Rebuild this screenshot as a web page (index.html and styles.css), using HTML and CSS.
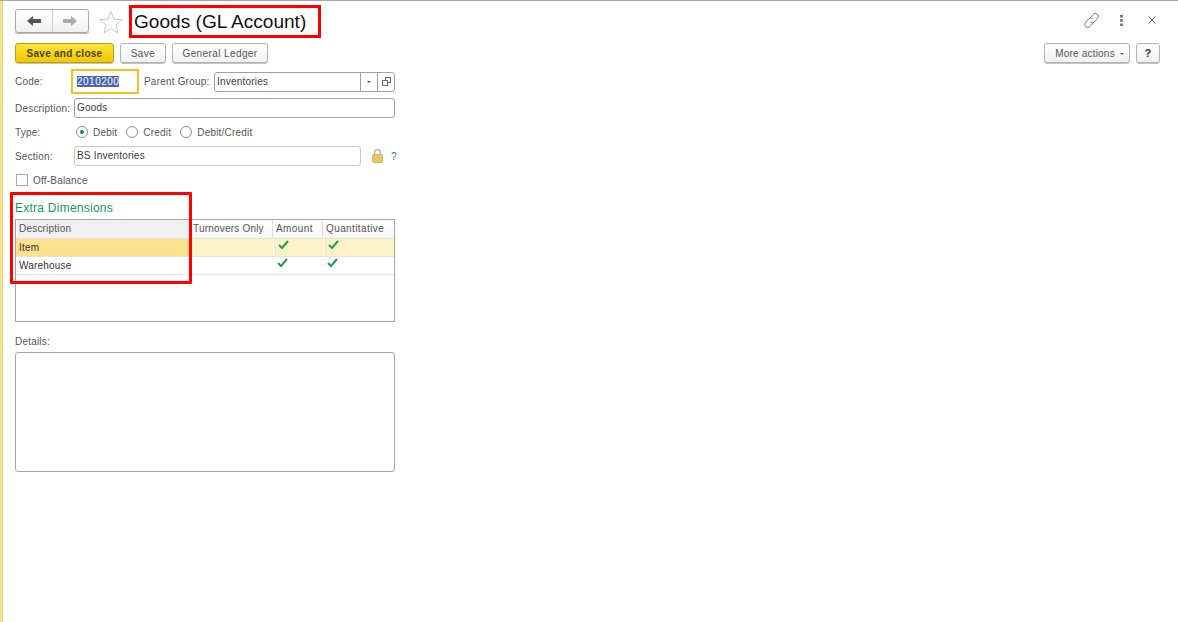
FILE: index.html
```html
<!DOCTYPE html>
<html lang="en">
<head>
<meta charset="utf-8">
<title>Goods (GL Account)</title>
<link rel="stylesheet" href="styles.css">
</head>
<body>
<div class="strip"></div>
<main class="page">
  <header class="head">
    <div class="nav">
      <button class="nav-btn"><svg width="16" height="12" viewBox="0 0 16 12"><path d="M1 6l6-5v3h8v4H7v3z" fill="#555"/></svg></button>
      <button class="nav-btn"><svg width="16" height="12" viewBox="0 0 16 12"><path d="M15 6L9 1v3H1v4h8v3z" fill="#aaa"/></svg></button>
    </div>
    <svg class="star" width="24" height="24" viewBox="0 0 24 24"><path d="M12 1.500l3 7.700 8.300.5-6.400 5.300 2.100 8-7-4.500-7 4.500 2.100-8L.7 9.700 9 9.200z" fill="#fff" stroke="#c4c8cc"/></svg>
    <h1 class="title">Goods (GL Account)</h1>
    <div class="head-tools">
      <svg class="tool-link" width="17" height="17" viewBox="0 0 17 17" fill="none" stroke="#777" stroke-width="1"><path d="M7 6l3-3.500a3 3 0 0 1 4.500 4L11.500 10a3 3 0 0 1-4 .5"/><path d="M10 11l-3 3.500a3 3 0 0 1-4.500-4L5.500 7a3 3 0 0 1 4-.5"/></svg>
      <svg class="tool-dots" width="3" height="11" viewBox="0 0 3 11" fill="#777"><rect width="3" height="2.500"/><rect y="4.250" width="3" height="2.500"/><rect y="8.500" width="3" height="2.500"/></svg>
      <svg class="tool-close" width="8" height="8" viewBox="0 0 8 8" stroke="#666" stroke-width="1"><path d="M.5.500l7 7M7.500.500l-7 7"/></svg>
    </div>
  </header>

  <div class="commands">
    <button class="btn btn-primary">Save and close</button>
    <button class="btn btn-save">Save</button>
    <button class="btn btn-gl">General Ledger</button>
    <div class="commands-end">
      <button class="btn btn-more">More actions <span class="caret"></span></button>
      <button class="btn btn-help">?</button>
    </div>
  </div>

  <form class="form">
    <div class="row row-code">
      <label class="label label-code">Code:</label>
      <div class="code"><span class="selected">2010200</span></div>
      <label class="label-inline">Parent Group:</label>
      <div class="input input-parent">
        <span class="input-text">Inventories</span>
        <span class="input-btn"><span class="caret dark"></span></span>
        <span class="input-btn"><svg width="9" height="9" viewBox="0 0 9 9" fill="#fff" stroke="#666"><rect x="3.500" y="0.500" width="5" height="5"/><rect x="0.500" y="3.500" width="5" height="5"/></svg></span>
      </div>
    </div>
    <div class="row row-desc">
      <label class="label">Description:</label>
      <div class="input input-desc"><span class="input-text">Goods</span></div>
    </div>
    <div class="row row-type">
      <label class="label">Type:</label>
      <div class="radios">
        <span class="radio on"></span><span class="radio-text">Debit</span>
        <span class="radio"></span><span class="radio-text">Credit</span>
        <span class="radio"></span><span class="radio-text">Debit/Credit</span>
      </div>
    </div>
    <div class="row row-section">
      <label class="label">Section:</label>
      <div class="input input-section"><span class="input-text">BS Inventories</span></div>
      <svg class="lock" width="11" height="14" viewBox="0 0 11 14"><path d="M2.500 6V3.500a3 3 0 0 1 6 0V6" fill="none" stroke="#b8b8ac" stroke-width="1.500"/><rect x="0.500" y="5.500" width="10" height="8" rx="1" fill="#e6c565" stroke="#c9a548" stroke-width="0.700"/></svg>
      <span class="hint">?</span>
    </div>
    <div class="row row-check">
      <span class="check"></span>
      <span class="check-text">Off-Balance</span>
    </div>

    <h2 class="section-title">Extra Dimensions</h2>
    <div class="table">
      <div class="t-row t-head">
        <div class="cell c1">Description</div>
        <div class="cell c2">Turnovers Only</div>
        <div class="cell c3">Amount</div>
        <div class="cell c4">Quantitative</div>
      </div>
      <div class="t-row t-active">
        <div class="cell c1">Item</div>
        <div class="cell c2"></div>
        <div class="cell c3"><svg class="tick" width="11" height="10" viewBox="0 0 11 10"><path d="M1 5l3 3 6-7" fill="none" stroke="#1f9d55" stroke-width="2"/></svg></div>
        <div class="cell c4"><svg class="tick" width="11" height="10" viewBox="0 0 11 10"><path d="M1 5l3 3 6-7" fill="none" stroke="#1f9d55" stroke-width="2"/></svg></div>
      </div>
      <div class="t-row t-plain">
        <div class="cell c1">Warehouse</div>
        <div class="cell c2"></div>
        <div class="cell c3"><svg class="tick" width="11" height="10" viewBox="0 0 11 10"><path d="M1 5l3 3 6-7" fill="none" stroke="#1f9d55" stroke-width="2"/></svg></div>
        <div class="cell c4"><svg class="tick" width="11" height="10" viewBox="0 0 11 10"><path d="M1 5l3 3 6-7" fill="none" stroke="#1f9d55" stroke-width="2"/></svg></div>
      </div>
    </div>

    <div class="details-label">Details:</div>
    <div class="details"></div>
  </form>
  <div class="callout"></div>
</main>
</body>
</html>
```

FILE: styles.css
```css
* { box-sizing: border-box; }
html, body { margin: 0; height: 100%; }
body {
  display: flex;
  height: 622px;
  overflow: hidden;
  background: #fff;
  border-top: 1px solid #a6a6a6;
  font-family: "Liberation Sans", Arial, sans-serif;
  font-size: 10px;
  letter-spacing: .2px;
  color: #555;
}
.strip { width: 3px; background: #f5e28e; border-right: 1px solid #e8d06a; }
.page { position: relative; flex: 1; padding-left: 12px; padding-right: 18px; }

.head { display: flex; align-items: flex-start; height: 42px; padding-top: 4px; }
.nav { display: flex; width: 74px; height: 24px; margin-top: 4px; border: 1px solid #a9a9a9; border-radius: 3px; background: linear-gradient(#fff, #f0f0f0); box-shadow: 0 1px 0 #bbb; }
.nav-btn { flex: 1; display: flex; align-items: center; justify-content: center; padding: 0; border: 0; background: none; }
.nav-btn + .nav-btn { border-left: 1px solid #ccc; }
.star { margin: 5px 0 0 10px; }
.title { width: 192px; height: 33px; margin: 0 0 0 6px; padding: 0 0 0 2px; border: 3px solid #f00; font-size: 19.100px; font-weight: 400; line-height: 27px; letter-spacing: 0; color: #111; white-space: nowrap; }
.head-tools { display: flex; align-items: center; margin-left: auto; height: 30px; padding-right: 4px; }
.tool-dots { margin-left: 20px; }
.tool-close { margin-left: 25px; }

.commands { display: flex; align-items: flex-start; gap: 6px; height: 26px; }
.btn { height: 20px; padding: 0; border: 1px solid #b2b2b2; border-radius: 3px; background: linear-gradient(#fff, #f1f1f1); box-shadow: 0 1px 0 #c4c4c4; font: inherit; letter-spacing: .4px; color: #555; }
.btn-primary { width: 99px; border-color: #b99e12; background: linear-gradient(#fbe33c, #f2c800); color: #4d4410; font-weight: 700; letter-spacing: .25px; }
.btn-save { width: 46px; }
.btn-gl { width: 96px; }
.commands-end { display: flex; gap: 6px; margin-left: auto; }
.btn-more { width: 86px; padding-left: 5px; letter-spacing: .2px; }
.btn-help { width: 24px; font-weight: 700; font-size: 11px; color: #333; }
.caret { display: inline-block; width: 0; height: 0; margin-left: 2px; vertical-align: 2px; border: 2px solid transparent; border-top: 2px solid #666; border-bottom: 0; }
.caret.dark { border-width: 2px 2.500px 0; border-top-color: #555; margin: 0; vertical-align: 1px; }

.row { display: flex; align-items: center; }
.label { width: 59px; flex: none; }
.label-code { width: 56px; }
.row-code { height: 25px; }
.code { width: 68px; height: 25px; padding: 4px 0 0 4px; border: 2px solid #f3c21b; color: #333; line-height: 13px; }
.selected { background: #4a66b5; color: #fff; letter-spacing: .5px; }
.label-inline { margin-left: 5px; width: 70px; }
.input { display: flex; align-items: stretch; height: 20px; border: 1px solid #c8c8c8; border-radius: 3px; background: #fff; }
.input-text { flex: 1; padding-left: 2px; line-height: 17px; color: #3c3c3c; }
.input-parent { width: 181px; border-color: #a0a0a0; }
.input-btn { display: flex; align-items: center; justify-content: center; width: 17px; border-left: 1px solid #a0a0a0; }
.row-desc { height: 20px; margin-top: 4px; }
.input-desc { width: 321px; border-color: #a0a0a0; }
.row-type { height: 20px; margin-top: 4px; }
.radios { display: flex; align-items: center; margin-left: 2px; }
.radio { position: relative; width: 12px; height: 12px; margin-right: 5px; border: 1px solid #8f8f8f; border-radius: 50%; }
.radio.on::after { content: ""; position: absolute; left: 3px; top: 3px; width: 4px; height: 4px; border-radius: 50%; background: #1a8a4c; }
.radio-text { margin-right: 9px; }
.row-section { height: 20px; margin-top: 4px; }
.input-section { width: 287px; }
.lock { margin-left: 11px; }
.hint { margin-left: 8px; color: #1f78b4; }
.row-check { height: 14px; margin-top: 7px; }
.check { width: 12px; height: 12px; margin-left: 1px; border: 1px solid #ababab; }
.check-text { margin-left: 5px; }

.section-title { margin: 14px 0 0; font-size: 12px; font-weight: 400; line-height: 14px; letter-spacing: .25px; color: #129a5a; }
.table { width: 380px; height: 103px; margin-top: 4px; border: 1px solid #a6a6a6; }
.t-row { display: grid; grid-template-columns: 174px 83px 50px 1fr; }
.t-head { height: 19px; border-bottom: 1px solid #e2e2e2; letter-spacing: .4px; }
.t-head .cell { background: #f0f0f0; border-right: 1px solid #fff; }
.t-head .c1 { box-shadow: inset 1px 0 0 #fff; background: #f0f0f0; letter-spacing: .2px; }
.t-head .c2, .t-head .c3, .t-head .c4 { background: linear-gradient(#fff, #f6f6f6); border-right: 1px solid #ddd; }
.t-head .c2 { letter-spacing: .2px; }
.t-head .c4 { border-right: 0; }
.cell { padding-left: 3px; line-height: 17px; white-space: nowrap; overflow: hidden; }
.t-active { height: 18px; border-bottom: 1px solid #e2e2e2; background: #fdf2c6; line-height: 18px; }
.t-active .c1 { background: #fde18f; color: #333; border-right: 1px solid #fff; }
.t-active .c3, .t-active .c4 { border-left: 1px solid #fff; }
.t-plain { height: 18px; border-bottom: 1px solid #e2e2e2; color: #333; }
.t-active .cell, .t-plain .cell { line-height: 18px; }
.tick { display: block; margin: 1px 0 0 1px; }

.details-label { margin-top: 13px; line-height: 13px; }
.details { width: 380px; height: 120px; margin-top: 4px; border: 1px solid #a6a6a6; border-radius: 3px; }

.callout { position: absolute; left: 7px; top: 191px; width: 182px; height: 92px; border: 3px solid #f00; border-radius: 1px; pointer-events: none; }
```
